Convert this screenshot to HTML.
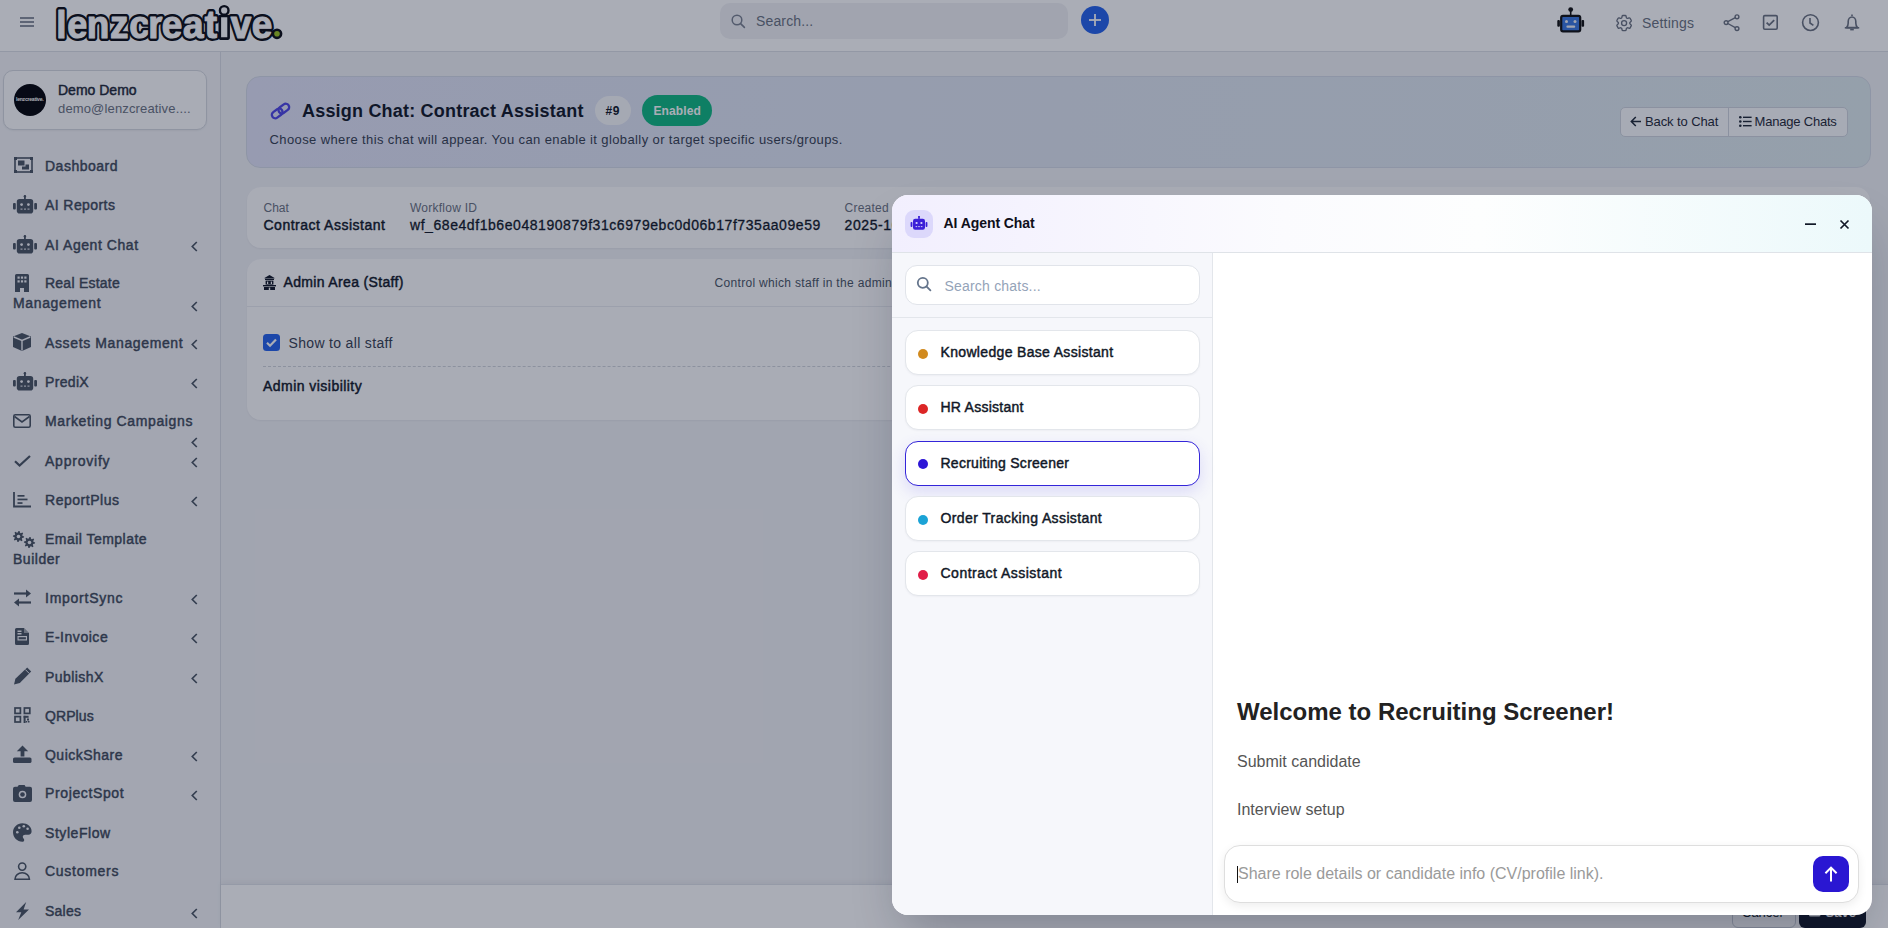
<!DOCTYPE html>
<html><head><meta charset="utf-8">
<style>
*{box-sizing:border-box;margin:0;padding:0}
html,body{width:1888px;height:928px;overflow:hidden}
body{position:relative;background:#f2f3f6;font-family:"Liberation Sans",sans-serif;color:#111827}
.a{position:absolute;white-space:nowrap}
.t{position:absolute;white-space:nowrap;line-height:1}
svg{position:absolute;overflow:visible}
.sbt{position:absolute;left:45px;font-size:14px;font-weight:400;-webkit-text-stroke:.45px #414a5a;color:#414a5a;line-height:1;white-space:nowrap}
.chev{position:absolute;left:191px;width:7px;height:11px}
.ico{position:absolute;fill:#4b5563}
</style></head><body>

<!-- HEADER -->
<div class="a" style="left:0;top:0;width:1888px;height:52px;background:#fff;border-bottom:1px solid #dcdfe5"></div>
<svg style="left:20px;top:17px" width="14" height="10" viewBox="0 0 14 10"><rect x="0" y="0" width="14" height="2" fill="#8a919d"/><rect x="0" y="4" width="14" height="2" fill="#8a919d"/><rect x="0" y="8" width="14" height="2" fill="#8a919d"/></svg>
<svg style="left:0;top:0" width="300" height="50" viewBox="0 0 300 50"><g font-family="Liberation Sans" font-weight="700" font-size="41" fill="#fff" stroke-linejoin="round" text-anchor="middle"><text transform="translate(61.4,37.5) scale(0.9,0.94)" stroke="#0b0d14" stroke-width="6.2">l</text><text transform="translate(61.4,37.5) scale(0.9,0.94)" stroke="#fff" stroke-width="1.2">l</text><text transform="translate(77.4,37.5) scale(0.9,0.94)" stroke="#0b0d14" stroke-width="6.2">e</text><text transform="translate(77.4,37.5) scale(0.9,0.94)" stroke="#fff" stroke-width="1.2">e</text><text transform="translate(98,37.5) scale(0.9,0.94)" stroke="#0b0d14" stroke-width="6.2">n</text><text transform="translate(98,37.5) scale(0.9,0.94)" stroke="#fff" stroke-width="1.2">n</text><text transform="translate(119.3,37.5) scale(0.9,0.94)" stroke="#0b0d14" stroke-width="6.2">z</text><text transform="translate(119.3,37.5) scale(0.9,0.94)" stroke="#fff" stroke-width="1.2">z</text><text transform="translate(139.4,37.5) scale(0.9,0.94)" stroke="#0b0d14" stroke-width="6.2">c</text><text transform="translate(139.4,37.5) scale(0.9,0.94)" stroke="#fff" stroke-width="1.2">c</text><text transform="translate(155.4,37.5) scale(0.9,0.94)" stroke="#0b0d14" stroke-width="6.2">r</text><text transform="translate(155.4,37.5) scale(0.9,0.94)" stroke="#fff" stroke-width="1.2">r</text><text transform="translate(172.1,37.5) scale(0.9,0.94)" stroke="#0b0d14" stroke-width="6.2">e</text><text transform="translate(172.1,37.5) scale(0.9,0.94)" stroke="#fff" stroke-width="1.2">e</text><text transform="translate(193.3,37.5) scale(0.9,0.94)" stroke="#0b0d14" stroke-width="6.2">a</text><text transform="translate(193.3,37.5) scale(0.9,0.94)" stroke="#fff" stroke-width="1.2">a</text><text transform="translate(210.8,37.5) scale(0.9,0.94)" stroke="#0b0d14" stroke-width="6.2">t</text><text transform="translate(210.8,37.5) scale(0.9,0.94)" stroke="#fff" stroke-width="1.2">t</text><rect x="219.8" y="16" width="8.8" height="22.6" rx="0.5" fill="#fff" stroke="#0b0d14" stroke-width="2.6"/><circle cx="224.2" cy="10.4" r="4.3" fill="#fff" stroke="#0b0d14" stroke-width="2.4"/><text transform="translate(241,37.5) scale(0.9,0.94)" stroke="#0b0d14" stroke-width="6.2">v</text><text transform="translate(241,37.5) scale(0.9,0.94)" stroke="#fff" stroke-width="1.2">v</text><text transform="translate(262,37.5) scale(0.9,0.94)" stroke="#0b0d14" stroke-width="6.2">e</text><text transform="translate(262,37.5) scale(0.9,0.94)" stroke="#fff" stroke-width="1.2">e</text></g><circle cx="277" cy="33.8" r="4.1" fill="#9cc21f" stroke="#0b0d14" stroke-width="2.6"/></svg>
<div class="a" style="left:720px;top:3px;width:348px;height:36px;background:#f1f2f5;border-radius:10px"></div>
<svg style="left:731px;top:14px" width="15" height="15" viewBox="0 0 15 15"><circle cx="6" cy="6" r="4.8" fill="none" stroke="#7b8290" stroke-width="1.5"/><line x1="9.6" y1="9.6" x2="13.4" y2="13.4" stroke="#7b8290" stroke-width="1.6" stroke-linecap="round"/></svg>
<div class="t" style="left:756px;top:14px;font-size:14px;color:#6b7280;letter-spacing:.15px">Search...</div>
<div class="a" style="left:1081px;top:6px;width:28px;height:28px;border-radius:50%;background:#2563eb"></div>
<svg style="left:1087px;top:12px" width="16" height="16" viewBox="0 0 16 16"><line x1="8" y1="2" x2="8" y2="14" stroke="#fff" stroke-width="1.8"/><line x1="2" y1="8" x2="14" y2="8" stroke="#fff" stroke-width="1.8"/></svg>


<!-- header right -->
<svg style="left:1556px;top:6px" width="30" height="28" viewBox="0 0 30 28">
 <line x1="14.7" y1="3.5" x2="14.7" y2="9.5" stroke="#111" stroke-width="1.6"/>
 <circle cx="14.7" cy="3.6" r="2.4" fill="#111"/>
 <rect x="5.2" y="9.8" width="19" height="15.6" rx="1.8" fill="#3b78e0" stroke="#111" stroke-width="2.2"/>
 <rect x="1.3" y="14" width="2.6" height="6.8" rx="1" fill="#111"/>
 <rect x="25.5" y="14" width="2.6" height="6.8" rx="1" fill="#111"/>
 <circle cx="10.5" cy="15.6" r="1.5" fill="#f3f4f6"/><circle cx="19" cy="15.6" r="1.5" fill="#f3f4f6"/>
 <rect x="10.4" y="19.6" width="8.8" height="2.2" rx="1" fill="#f3f4f6"/>
</svg>
<svg style="left:1614px;top:12.5px" width="20.2" height="20.2" viewBox="0 0 24 24"><path fill="none" stroke="#6b7280" stroke-width="1.6" d="M9.594 3.94c.09-.542.56-.94 1.11-.94h2.593c.55 0 1.02.398 1.11.94l.213 1.281c.063.374.313.686.645.87.074.04.147.083.22.127.325.196.72.257 1.075.124l1.217-.456a1.125 1.125 0 0 1 1.37.49l1.296 2.247a1.125 1.125 0 0 1-.26 1.431l-1.003.827c-.293.241-.438.613-.43.992a7.723 7.723 0 0 1 0 .255c-.008.378.137.75.43.991l1.004.827c.424.35.534.955.26 1.43l-1.298 2.247a1.125 1.125 0 0 1-1.369.491l-1.217-.456c-.355-.133-.75-.072-1.076.124a6.47 6.470 0 0 1-.22.128c-.331.183-.581.495-.644.869l-.213 1.281c-.09.543-.56.94-1.110.94h-2.594c-.55 0-1.019-.398-1.11-.94l-.213-1.281c-.062-.374-.312-.686-.644-.87a6.52 6.52 0 0 1-.22-.127c-.325-.196-.72-.257-1.076-.124l-1.217.456a1.125 1.125 0 0 1-1.369-.49l-1.297-2.247a1.125 1.125 0 0 1 .26-1.431l1.004-.827c.292-.24.437-.613.43-.991a6.932 6.932 0 0 1 0-.255c.007-.38-.138-.751-.43-.992l-1.004-.827a1.125 1.125 0 0 1-.26-1.43l1.297-2.247a1.125 1.125 0 0 1 1.37-.491l1.216.456c.356.133.751.072 1.076-.124.072-.044.146-.086.22-.128.332-.183.582-.495.644-.869l.214-1.28Z"/><circle cx="12" cy="12" r="3" fill="none" stroke="#6b7280" stroke-width="1.6"/></svg>
<div class="t" style="left:1642px;top:16px;font-size:14px;color:#6b7280;letter-spacing:.2px">Settings</div>
<svg style="left:1723px;top:13px" width="18" height="19" viewBox="0 0 18 19"><g fill="none" stroke="#6b7280" stroke-width="1.4"><circle cx="14" cy="3.8" r="1.9"/><circle cx="3.1" cy="9.6" r="1.9"/><circle cx="14" cy="15.6" r="1.9"/><line x1="4.8" y1="8.7" x2="12.3" y2="4.7"/><line x1="4.8" y1="10.5" x2="12.3" y2="14.7"/></g></svg>
<svg style="left:1762px;top:14px" width="17" height="17" viewBox="0 0 17 17"><rect x="1.6" y="1.6" width="13.6" height="13.6" rx="1.2" fill="none" stroke="#6b7280" stroke-width="1.6"/><path d="M4.6 8.6l2.6 2.5 5-5" fill="none" stroke="#6b7280" stroke-width="1.8"/></svg>
<svg style="left:1801px;top:13px" width="19" height="19" viewBox="0 0 19 19"><circle cx="9.5" cy="9.6" r="7.9" fill="none" stroke="#6b7280" stroke-width="1.6"/><path d="M9 5v5l3.4 2.4" fill="none" stroke="#6b7280" stroke-width="1.6"/></svg>
<svg style="left:1843px;top:13px" width="18" height="19" viewBox="0 0 18 19"><path d="M9 1.5v1.4M3.6 14.6c1-1.3 1.6-2.7 1.6-4.6V8.4C5.2 6 7 4 9 4s3.8 2 3.8 4.4V10c0 1.9.6 3.3 1.6 4.6z" fill="none" stroke="#6b7280" stroke-width="1.6" stroke-linejoin="round"/><path d="M1.8 14.8h14.4" stroke="#6b7280" stroke-width="1.6"/><path d="M7.2 16.6h3.6" stroke="#6b7280" stroke-width="1.6"/></svg>

<!-- SIDEBAR -->
<div class="a" style="left:0;top:52px;width:221px;height:876px;background:#f4f5f8;border-right:1px solid #d9dce3"></div>
<div class="a" style="left:3px;top:70px;width:203.5px;height:60px;background:#fdfdfe;border:1px solid #d6d9df;border-radius:10px;box-shadow:0 1px 2px rgba(0,0,0,.05)"></div>
<div class="a" style="left:14px;top:84px;width:32px;height:32px;border-radius:50%;background:#05060a"></div>
<div class="t" style="left:16px;top:97px;font-size:5px;color:#fff;font-weight:700;letter-spacing:-.2px">lenzcreative.</div>
<div class="t" style="left:58px;top:83px;font-size:14px;font-weight:400;-webkit-text-stroke:.45px #1f2937;color:#1f2937;letter-spacing:0px">Demo Demo</div>
<div class="t" style="left:58px;top:102px;font-size:13px;color:#6b7280;letter-spacing:.15px">demo@lenzcreative....</div>

<!-- sidebar items -->
<div class="sbt" style="left:45px;top:159px;letter-spacing:0.5px">Dashboard</div>
<div class="sbt" style="left:45px;top:198px;letter-spacing:0.416px">AI Reports</div>
<div class="sbt" style="left:45px;top:238px;letter-spacing:0.553px">AI Agent Chat</div>
<div class="sbt" style="left:45px;top:276px;letter-spacing:0.239px">Real Estate</div>
<div class="sbt" style="left:13px;top:296px;letter-spacing:0.648px">Management</div>
<div class="sbt" style="left:45px;top:336px;letter-spacing:0.628px">Assets Management</div>
<div class="sbt" style="left:45px;top:375px;letter-spacing:0.328px">PrediX</div>
<div class="sbt" style="left:45px;top:414px;letter-spacing:0.623px">Marketing Campaigns</div>
<div class="sbt" style="left:45px;top:454px;letter-spacing:0.782px">Approvify</div>
<div class="sbt" style="left:45px;top:493px;letter-spacing:0.523px">ReportPlus</div>
<div class="sbt" style="left:45px;top:532px;letter-spacing:0.468px">Email Template</div>
<div class="sbt" style="left:13px;top:552px;letter-spacing:0.529px">Builder</div>
<div class="sbt" style="left:45px;top:591px;letter-spacing:0.749px">ImportSync</div>
<div class="sbt" style="left:45px;top:630px;letter-spacing:0.543px">E-Invoice</div>
<div class="sbt" style="left:45px;top:670px;letter-spacing:0.436px">PublishX</div>
<div class="sbt" style="left:45px;top:709px;letter-spacing:0.086px">QRPlus</div>
<div class="sbt" style="left:45px;top:748px;letter-spacing:0.484px">QuickShare</div>
<div class="sbt" style="left:45px;top:786px;letter-spacing:0.625px">ProjectSpot</div>
<div class="sbt" style="left:45px;top:826px;letter-spacing:0.562px">StyleFlow</div>
<div class="sbt" style="left:45px;top:864px;letter-spacing:0.729px">Customers</div>
<div class="sbt" style="left:45px;top:904px;letter-spacing:0.244px">Sales</div>
<svg class="chev" style="top:241.0px" viewBox="0 0 7 11"><path d="M5.8 1L1.3 5.5 5.8 10" fill="none" stroke="#4b5563" stroke-width="1.7"/></svg>
<svg class="chev" style="top:300.5px" viewBox="0 0 7 11"><path d="M5.8 1L1.3 5.5 5.8 10" fill="none" stroke="#4b5563" stroke-width="1.7"/></svg>
<svg class="chev" style="top:339.0px" viewBox="0 0 7 11"><path d="M5.8 1L1.3 5.5 5.8 10" fill="none" stroke="#4b5563" stroke-width="1.7"/></svg>
<svg class="chev" style="top:378.0px" viewBox="0 0 7 11"><path d="M5.8 1L1.3 5.5 5.8 10" fill="none" stroke="#4b5563" stroke-width="1.7"/></svg>
<svg class="chev" style="top:437.0px" viewBox="0 0 7 11"><path d="M5.8 1L1.3 5.5 5.8 10" fill="none" stroke="#4b5563" stroke-width="1.7"/></svg>
<svg class="chev" style="top:457.0px" viewBox="0 0 7 11"><path d="M5.8 1L1.3 5.5 5.8 10" fill="none" stroke="#4b5563" stroke-width="1.7"/></svg>
<svg class="chev" style="top:496.0px" viewBox="0 0 7 11"><path d="M5.8 1L1.3 5.5 5.8 10" fill="none" stroke="#4b5563" stroke-width="1.7"/></svg>
<svg class="chev" style="top:593.5px" viewBox="0 0 7 11"><path d="M5.8 1L1.3 5.5 5.8 10" fill="none" stroke="#4b5563" stroke-width="1.7"/></svg>
<svg class="chev" style="top:633.0px" viewBox="0 0 7 11"><path d="M5.8 1L1.3 5.5 5.8 10" fill="none" stroke="#4b5563" stroke-width="1.7"/></svg>
<svg class="chev" style="top:673.0px" viewBox="0 0 7 11"><path d="M5.8 1L1.3 5.5 5.8 10" fill="none" stroke="#4b5563" stroke-width="1.7"/></svg>
<svg class="chev" style="top:751.0px" viewBox="0 0 7 11"><path d="M5.8 1L1.3 5.5 5.8 10" fill="none" stroke="#4b5563" stroke-width="1.7"/></svg>
<svg class="chev" style="top:790.0px" viewBox="0 0 7 11"><path d="M5.8 1L1.3 5.5 5.8 10" fill="none" stroke="#4b5563" stroke-width="1.7"/></svg>
<svg class="chev" style="top:907.5px" viewBox="0 0 7 11"><path d="M5.8 1L1.3 5.5 5.8 10" fill="none" stroke="#4b5563" stroke-width="1.7"/></svg>

<svg class="ico" style="left:14px;top:157px" width="19" height="16" viewBox="0 0 19 16"><rect x="1" y="1" width="17" height="14" fill="none" stroke="#4b5563" stroke-width="1.6"/><rect x="0" y="0" width="3" height="3"/><rect x="16" y="0" width="3" height="3"/><rect x="0" y="13" width="3" height="3"/><rect x="16" y="13" width="3" height="3"/><rect x="4" y="3.5" width="6.5" height="5" /><path d="M11.5 7.5h3.5v5h-7v-3h3.5z"/></svg>
<svg class="ico" style="left:12.5px;top:195px" width="24" height="19" viewBox="0 0 24 19"><rect x="11" y="0.5" width="1.8" height="4"/><circle cx="11.9" cy="1.2" r="1.2"/><rect x="3.8" y="4" width="16.4" height="14.5" rx="2.8"/><rect x="0" y="8" width="2.8" height="6.5" rx="1"/><rect x="21.2" y="8" width="2.8" height="6.5" rx="1"/><circle cx="8.6" cy="9.6" r="1.4" fill="#f4f5f8"/><circle cx="15.4" cy="9.6" r="1.4" fill="#f4f5f8"/><rect x="7.5" y="13.6" width="2" height="1" fill="#f4f5f8"/><rect x="11" y="13.6" width="2" height="1" fill="#f4f5f8"/><rect x="14.5" y="13.6" width="2" height="1" fill="#f4f5f8"/></svg><svg class="ico" style="left:12.5px;top:234.5px" width="24" height="19" viewBox="0 0 24 19"><rect x="11" y="0.5" width="1.8" height="4"/><circle cx="11.9" cy="1.2" r="1.2"/><rect x="3.8" y="4" width="16.4" height="14.5" rx="2.8"/><rect x="0" y="8" width="2.8" height="6.5" rx="1"/><rect x="21.2" y="8" width="2.8" height="6.5" rx="1"/><circle cx="8.6" cy="9.6" r="1.4" fill="#f4f5f8"/><circle cx="15.4" cy="9.6" r="1.4" fill="#f4f5f8"/><rect x="7.5" y="13.6" width="2" height="1" fill="#f4f5f8"/><rect x="11" y="13.6" width="2" height="1" fill="#f4f5f8"/><rect x="14.5" y="13.6" width="2" height="1" fill="#f4f5f8"/></svg><svg class="ico" style="left:12.5px;top:372px" width="24" height="19" viewBox="0 0 24 19"><rect x="11" y="0.5" width="1.8" height="4"/><circle cx="11.9" cy="1.2" r="1.2"/><rect x="3.8" y="4" width="16.4" height="14.5" rx="2.8"/><rect x="0" y="8" width="2.8" height="6.5" rx="1"/><rect x="21.2" y="8" width="2.8" height="6.5" rx="1"/><circle cx="8.6" cy="9.6" r="1.4" fill="#f4f5f8"/><circle cx="15.4" cy="9.6" r="1.4" fill="#f4f5f8"/><rect x="7.5" y="13.6" width="2" height="1" fill="#f4f5f8"/><rect x="11" y="13.6" width="2" height="1" fill="#f4f5f8"/><rect x="14.5" y="13.6" width="2" height="1" fill="#f4f5f8"/></svg>
<svg class="ico" style="left:15px;top:274px" width="14" height="18" viewBox="0 0 14 18"><path d="M1.5 0h11A1.5 1.5 0 0 1 14 1.5V18H9v-4H5v4H0V1.5A1.5 1.5 0 0 1 1.5 0z"/><g fill="#f4f5f8"><rect x="2.5" y="2.5" width="2.2" height="2.2"/><rect x="5.9" y="2.5" width="2.2" height="2.2"/><rect x="9.3" y="2.5" width="2.2" height="2.2"/><rect x="2.5" y="6.3" width="2.2" height="2.2"/><rect x="5.9" y="6.3" width="2.2" height="2.2"/><rect x="9.3" y="6.3" width="2.2" height="2.2"/></g></svg>
<svg class="ico" style="left:13px;top:333px" width="18" height="18" viewBox="0 0 18 18"><path d="M9 0L18 3.5V14L9 18 0 14V3.5z"/><path d="M0.8 4L9 7.4 17.2 4M9 7.4V17.5" fill="none" stroke="#f4f5f8" stroke-width="1.4"/></svg>
<svg class="ico" style="left:13px;top:414px" width="18" height="14" viewBox="0 0 18 14"><rect x="0.8" y="0.8" width="16.4" height="12.4" rx="1.5" fill="none" stroke="#4b5563" stroke-width="1.6"/><path d="M1.5 2.5L9 8l7.5-5.5" fill="none" stroke="#4b5563" stroke-width="1.6"/></svg>
<svg class="ico" style="left:14px;top:455px" width="17" height="12" viewBox="0 0 17 12"><path d="M1 6.2l4.6 4.4L16 1" fill="none" stroke="#4b5563" stroke-width="2.2"/></svg>
<svg class="ico" style="left:13px;top:491.5px" width="18" height="16" viewBox="0 0 18 16"><path d="M1 0v14.5h17" fill="none" stroke="#4b5563" stroke-width="1.8"/><rect x="4.5" y="3" width="7" height="1.7"/><rect x="4.5" y="6.6" width="10" height="1.7"/><rect x="4.5" y="10.2" width="5" height="1.7"/></svg>
<svg class="ico" style="left:13px;top:530.5px" width="23" height="17" viewBox="0 0 23 17"><polygon points="11.10,5.50 10.99,6.59 9.23,7.04 8.85,7.74 9.46,9.46 8.61,10.16 7.04,9.23 6.29,9.45 5.50,11.10 4.41,10.99 3.96,9.23 3.26,8.85 1.54,9.46 0.84,8.61 1.77,7.04 1.55,6.29 -0.10,5.50 0.01,4.41 1.77,3.96 2.15,3.26 1.54,1.54 2.39,0.84 3.96,1.77 4.71,1.55 5.50,-0.10 6.59,0.01 7.04,1.77 7.74,2.15 9.46,1.54 10.16,2.39 9.23,3.96 9.45,4.71"/><circle cx="5.5" cy="5.5" r="1.8" fill="#f4f5f8"/><polygon points="22.10,11.50 21.99,12.59 20.23,13.04 19.85,13.74 20.46,15.46 19.61,16.16 18.04,15.23 17.29,15.45 16.50,17.10 15.41,16.99 14.96,15.23 14.26,14.85 12.54,15.46 11.84,14.61 12.77,13.04 12.55,12.29 10.90,11.50 11.01,10.41 12.77,9.96 13.15,9.26 12.54,7.54 13.39,6.84 14.96,7.77 15.71,7.55 16.50,5.90 17.59,6.01 18.04,7.77 18.74,8.15 20.46,7.54 21.16,8.39 20.23,9.96 20.45,10.71"/><circle cx="16.5" cy="11.5" r="1.8" fill="#f4f5f8"/></svg>
<svg class="ico" style="left:13px;top:588.5px" width="19" height="18" viewBox="0 0 19 18"><path d="M1 4.5h13" stroke="#4b5563" stroke-width="2.2"/><path d="M13 0.5l5 4-5 4z"/><path d="M18 13.5H5" stroke="#4b5563" stroke-width="2.2"/><path d="M6 9.5l-5 4 5 4z"/></svg>
<svg class="ico" style="left:15px;top:627.5px" width="15" height="17" viewBox="0 0 15 17"><path d="M1.5 0H9l5 5v10.5a1.5 1.5 0 0 1-1.5 1.5h-11A1.5 1.5 0 0 1 0 15.5v-14A1.5 1.5 0 0 1 1.5 0z"/><path d="M9 0v5h5" fill="#f4f5f8" opacity=".5"/><rect x="2.5" y="8" width="9.5" height="4.5" fill="#f4f5f8"/><rect x="3.6" y="9.2" width="7.3" height="2.1"/><rect x="2.5" y="2.5" width="4" height="1.5" fill="#f4f5f8"/><rect x="2.5" y="5" width="4" height="1.5" fill="#f4f5f8"/></svg>
<svg class="ico" style="left:13px;top:667px" width="19" height="18" viewBox="0 0 19 18"><path d="M14.2 0.6l4 4-11.4 11.4L1 17.6l1.4-5.8z"/><path d="M12.3 2.5l4 4" stroke="#f4f5f8" stroke-width="1"/></svg>
<svg class="ico" style="left:14px;top:707px" width="17" height="16" viewBox="0 0 17 16"><g fill="none" stroke="#4b5563" stroke-width="1.7"><rect x="1" y="1" width="5.4" height="5.4"/><rect x="10.4" y="1" width="5.4" height="5.4"/><rect x="1" y="9.6" width="5.4" height="5.4"/></g><rect x="9.6" y="8.8" width="2" height="7.2"/><rect x="9.6" y="8.8" width="5" height="2"/><rect x="13" y="11.5" width="2" height="2"/><rect x="14" y="14" width="1.5" height="1.5"/><rect x="11.8" y="14" width="1.5" height="1.5"/></svg>
<svg class="ico" style="left:13px;top:745px" width="19" height="18" viewBox="0 0 19 18"><path d="M9.5 0.5L3.8 6.2h3.8v5.3h3.8V6.2h3.8z"/><rect x="0" y="12.5" width="18.5" height="5.5" rx="1.6"/></svg>
<svg class="ico" style="left:13px;top:784.5px" width="19" height="17" viewBox="0 0 19 17"><path d="M2 1.8h2.5L5.8 0h5.8l1 1.8H17a2 2 0 0 1 2 2V15a2 2 0 0 1-2 2H2a2 2 0 0 1-2-2V3.8a2 2 0 0 1 2-2z"/><circle cx="9.5" cy="9.5" r="3.8" fill="#f4f5f8"/><circle cx="9.5" cy="9.5" r="2.3"/></svg>
<svg class="ico" style="left:13px;top:822.5px" width="19" height="19" viewBox="0 0 19 19"><path d="M9.3 0.2C4.2 0.2 0 4.2 0 9.3s4.2 9.5 9.3 9.5c1.3 0 1.9-0.9 1.9-1.8 0-1.4-1.4-1.7-1.4-3.2 0-1.3 1-2.1 2.3-2.1h3.2c2.1 0 3.3-1.4 3.3-3.5C18.6 3.6 14.4 0.2 9.3 0.2z"/><g fill="#f4f5f8"><circle cx="4.3" cy="9.3" r="1.3"/><circle cx="6.3" cy="4.8" r="1.3"/><circle cx="10.8" cy="3.3" r="1.3"/><circle cx="14.6" cy="5.8" r="1.3"/></g></svg>
<svg class="ico" style="left:14px;top:862px" width="17" height="18" viewBox="0 0 17 18"><circle cx="8.2" cy="4.6" r="3.6" fill="none" stroke="#4b5563" stroke-width="1.6"/><path d="M1 17.2c0-3.8 3.2-6.4 7.2-6.4s7.2 2.6 7.2 6.4z" fill="none" stroke="#4b5563" stroke-width="1.6"/></svg>
<svg class="ico" style="left:15px;top:902px" width="15" height="18" viewBox="0 0 15 18"><path d="M11.2 0L1 10.2h5.3L3.2 18 14 7.5H8.6z"/></svg>


<!-- CONTENT -->
<div class="a" style="left:246px;top:76px;width:1625px;height:92px;border-radius:14px;border:1px solid #d5dbe6;background:linear-gradient(90deg,#e2e4f7 0%,#e0e7f2 50%,#dfebef 100%)"></div>
<svg style="left:269px;top:102px" width="23" height="18" viewBox="0 0 23 18"><g transform="rotate(-36 11.5 9)" fill="none" stroke="#4f46e5" stroke-width="2.3"><rect x="1.6" y="5.6" width="11.6" height="6.8" rx="3.4"/><rect x="9.8" y="5.6" width="11.6" height="6.8" rx="3.4"/></g></svg>
<div class="t" style="left:302px;top:101.5px;font-size:18px;font-weight:700;color:#111827;letter-spacing:.2px">Assign Chat: Contract Assistant</div>
<div class="a" style="left:595px;top:96px;width:36px;height:29px;border-radius:15px;background:#f8f9fb"></div>
<div class="t" style="left:605.5px;top:105px;font-size:12px;font-weight:700;color:#111827;letter-spacing:.6px">#9</div>
<div class="a" style="left:642px;top:95px;width:70px;height:31px;border-radius:16px;background:#10b981"></div>
<div class="t" style="left:653.5px;top:105px;font-size:12px;font-weight:700;color:#fff;letter-spacing:.1px">Enabled</div>
<div class="t" style="left:269.5px;top:133px;font-size:13px;color:#374151;letter-spacing:.39px">Choose where this chat will appear. You can enable it globally or target specific users/groups.</div>
<div class="a" style="left:1620px;top:107px;width:227.5px;height:30px;border-radius:5px;border:1px solid #cfd5de;background:#fbfcfd"></div>
<div class="a" style="left:1728px;top:107px;width:1px;height:30px;background:#cfd5de"></div>
<svg style="left:1630px;top:116px" width="12" height="11" viewBox="0 0 12 11"><path d="M11 5.5H1.5M5.8 1L1.3 5.5 5.8 10" fill="none" stroke="#1f2937" stroke-width="1.5"/></svg>
<div class="t" style="left:1645px;top:115px;font-size:13px;color:#1f2937;letter-spacing:-.1px">Back to Chat</div>
<svg style="left:1738.5px;top:116px" width="13" height="11" viewBox="0 0 13 11"><g fill="#1f2937"><circle cx="1.3" cy="1.3" r="1.3"/><circle cx="1.3" cy="5.5" r="1.3"/><circle cx="1.3" cy="9.7" r="1.3"/><rect x="4" y=".6" width="8.6" height="1.4"/><rect x="4" y="4.8" width="8.6" height="1.4"/><rect x="4" y="9" width="8.6" height="1.4"/></g></svg>
<div class="t" style="left:1754.5px;top:115px;font-size:13px;color:#1f2937;letter-spacing:-.2px">Manage Chats</div>

<div class="a" style="left:247px;top:187px;width:1623px;height:61px;border-radius:14px;background:#fdfdfe;box-shadow:0 1px 2px rgba(15,23,42,.05)"></div>
<div class="t" style="left:263.5px;top:202px;font-size:12px;color:#6b7280">Chat</div>
<div class="t" style="left:263.5px;top:218px;font-size:14px;font-weight:400;-webkit-text-stroke:.45px #111827;color:#111827;letter-spacing:.51px">Contract Assistant</div>
<div class="t" style="left:410px;top:202px;font-size:12px;color:#6b7280;letter-spacing:.25px">Workflow ID</div>
<div class="t" style="left:410px;top:218px;font-size:14px;font-weight:400;-webkit-text-stroke:.3px #111827;color:#111827;letter-spacing:.56px">wf_68e4df1b6e048190879f31c6979ebc0d06b17f735aa09e59</div>
<div class="t" style="left:844.5px;top:202px;font-size:12px;color:#6b7280;letter-spacing:.25px">Created</div>
<div class="t" style="left:844.5px;top:218px;font-size:14px;font-weight:400;-webkit-text-stroke:.35px #111827;color:#111827;letter-spacing:.6px">2025-10-14 16:22</div>

<div class="a" style="left:247px;top:259px;width:1623px;height:161px;border-radius:14px;background:#fdfdfe;box-shadow:0 1px 2px rgba(15,23,42,.05)"></div>
<div class="a" style="left:247px;top:306px;width:1623px;height:1px;background:#eaecf0"></div>
<svg style="left:263px;top:274.5px" width="13" height="15" viewBox="0 0 13 15"><g fill="#111827"><path d="M6.5 0L1 3.2h11z"/><rect x="2" y="3.6" width="9" height="1.4"/><rect x="2.6" y="5.6" width="7.8" height="4"/><rect x="0" y="10" width="13" height="1.4"/><rect x="1" y="12" width="11" height="3"/></g><g fill="#fdfdfe"><rect x="4" y="6.6" width="1.2" height="2.4"/><rect x="7.8" y="6.6" width="1.2" height="2.4"/><rect x="5.8" y="12.6" width="1.4" height="2.4"/></g></svg>
<div class="t" style="left:283.5px;top:275px;font-size:14px;font-weight:400;-webkit-text-stroke:.45px #111827;color:#111827;letter-spacing:.34px">Admin Area (Staff)</div>
<div class="t" style="left:714.5px;top:277px;font-size:12px;color:#4b5563;letter-spacing:.32px">Control which staff in the admin area can see this chat.</div>
<div class="a" style="left:263px;top:334px;width:17px;height:17px;border-radius:3.5px;background:#2563eb"></div>
<svg style="left:263px;top:334px" width="17" height="17" viewBox="0 0 17 17"><path d="M4 8.8l3 2.9 6-6.2" fill="none" stroke="#fff" stroke-width="2.2"/></svg>
<div class="t" style="left:288.5px;top:336px;font-size:14px;color:#374151;letter-spacing:.33px">Show to all staff</div>
<div class="a" style="left:263px;top:366px;width:1591px;height:0;border-top:1px dashed #d1d5db"></div>
<div class="t" style="left:263px;top:379px;font-size:14px;font-weight:400;-webkit-text-stroke:.45px #111827;color:#111827;letter-spacing:.46px">Admin visibility</div>

<div class="a" style="left:221px;top:884px;width:1667px;height:44px;background:#fff;border-top:1px solid #dfe2e8;box-shadow:0 -2px 6px rgba(15,23,42,.05)"></div>
<div class="a" style="left:1732px;top:894px;width:64px;height:34px;border-radius:6px;border:1px solid #c9ced6;background:#fff"></div>
<div class="t" style="left:1742px;top:906px;font-size:13px;color:#111827">Cancel</div>
<div class="a" style="left:1799px;top:894px;width:67px;height:34px;border-radius:6px;background:#111827"></div>
<svg style="left:1809px;top:905px" width="12" height="12" viewBox="0 0 12 12"><rect x="0" y="0" width="11.5" height="11.5" rx="1.5" fill="#fff"/></svg>
<div class="t" style="left:1825.5px;top:906px;font-size:13px;font-weight:700;color:#fff">Save</div>

<!-- OVERLAY -->
<div class="a" style="left:0;top:0;width:1888px;height:928px;background:rgba(12,20,45,.35)"></div>


<!-- CHAT PANEL -->
<div class="a" style="left:892px;top:195px;width:980px;height:720px;border-radius:16px;background:#fff;box-shadow:0 25px 50px -12px rgba(15,23,42,.28);overflow:hidden">
  <div class="a" style="left:0;top:0;width:980px;height:58px;background:linear-gradient(90deg,#f2effe 0%,#fbfbfe 40%,#fdfefe 60%,#ecf9fb 100%);border-bottom:1px solid #dfe3e8"></div>
  <div class="a" style="left:0;top:58px;width:321px;height:662px;background:#f6f7fb;border-right:1px solid #e3e6eb"></div>
  <div class="a" style="left:0;top:122px;width:320px;height:1px;background:#e3e6eb"></div>
</div>
<div class="a" style="left:905px;top:210px;width:28px;height:28px;border-radius:9px;background:#dcd8fb"></div>
<svg style="left:910px;top:216px" width="18" height="15" viewBox="0 0 18 15"><g fill="#3b1fd8"><rect x="8.3" y="0" width="1.4" height="3"/><circle cx="9" cy="0.9" r="0.9"/><rect x="3" y="2.8" width="12" height="11" rx="2.2"/><rect x="0.6" y="6" width="1.8" height="5" rx=".8"/><rect x="15.6" y="6" width="1.8" height="5" rx=".8"/></g><g fill="#dcd8fb"><circle cx="6.6" cy="7" r="1.1"/><circle cx="11.4" cy="7" r="1.1"/><rect x="5.6" y="10.2" width="1.6" height=".9"/><rect x="8.2" y="10.2" width="1.6" height=".9"/><rect x="10.8" y="10.2" width="1.6" height=".9"/></g></svg>
<div class="t" style="left:943.5px;top:215.5px;font-size:14px;font-weight:700;color:#0f0f1a;letter-spacing:-.07px">AI Agent Chat</div>
<svg style="left:1804px;top:218px" width="13" height="12" viewBox="0 0 13 12"><rect x="1" y="5.3" width="11" height="1.7" fill="#111827"/></svg>
<svg style="left:1839px;top:219px" width="11" height="11" viewBox="0 0 11 11"><path d="M1.5 1.5l8 8M9.5 1.5l-8 8" stroke="#111827" stroke-width="1.7"/></svg>

<div class="a" style="left:905px;top:265px;width:295px;height:40px;border-radius:12px;border:1px solid #e1e4ea;background:#fff"></div>
<svg style="left:916px;top:276px" width="16" height="16" viewBox="0 0 16 16"><circle cx="6.8" cy="6.8" r="5" fill="none" stroke="#64748b" stroke-width="1.8"/><line x1="10.4" y1="10.4" x2="14.4" y2="14.4" stroke="#64748b" stroke-width="1.8" stroke-linecap="round"/></svg>
<div class="t" style="left:944.5px;top:279px;font-size:14px;color:#94a3b8;letter-spacing:.2px">Search chats...</div>
<div class="a" style="left:905px;top:330px;width:295px;height:45px;border-radius:13px;border:1px solid #e3e6eb;background:#fff;box-shadow:0 1px 2px rgba(16,24,40,.04)"></div>
<div class="a" style="left:918px;top:348.8px;width:10px;height:10px;border-radius:50%;background:#d18a1e"></div>
<div class="t" style="left:940.5px;top:344.5px;font-size:14px;font-weight:400;-webkit-text-stroke:.45px #111827;color:#111827;letter-spacing:.33px">Knowledge Base Assistant</div>
<div class="a" style="left:905px;top:385px;width:295px;height:45px;border-radius:13px;border:1px solid #e3e6eb;background:#fff;box-shadow:0 1px 2px rgba(16,24,40,.04)"></div>
<div class="a" style="left:918px;top:403.8px;width:10px;height:10px;border-radius:50%;background:#dc2626"></div>
<div class="t" style="left:940.5px;top:399.5px;font-size:14px;font-weight:400;-webkit-text-stroke:.45px #111827;color:#111827;letter-spacing:.26px">HR Assistant</div>
<div class="a" style="left:905px;top:441px;width:295px;height:45px;border-radius:13px;border:1.5px solid #3425d9;background:#fff;box-shadow:0 6px 16px rgba(79,70,229,.16)"></div>
<div class="a" style="left:918px;top:459.3px;width:10px;height:10px;border-radius:50%;background:#2d16d6"></div>
<div class="t" style="left:940.5px;top:455.5px;font-size:14px;font-weight:400;-webkit-text-stroke:.45px #111827;color:#111827;letter-spacing:.26px">Recruiting Screener</div>
<div class="a" style="left:905px;top:496px;width:295px;height:45px;border-radius:13px;border:1px solid #e3e6eb;background:#fff;box-shadow:0 1px 2px rgba(16,24,40,.04)"></div>
<div class="a" style="left:918px;top:514.8px;width:10px;height:10px;border-radius:50%;background:#1ba3d6"></div>
<div class="t" style="left:940.5px;top:510.5px;font-size:14px;font-weight:400;-webkit-text-stroke:.45px #111827;color:#111827;letter-spacing:.38px">Order Tracking Assistant</div>
<div class="a" style="left:905px;top:551px;width:295px;height:45px;border-radius:13px;border:1px solid #e3e6eb;background:#fff;box-shadow:0 1px 2px rgba(16,24,40,.04)"></div>
<div class="a" style="left:918px;top:569.8px;width:10px;height:10px;border-radius:50%;background:#e11d48"></div>
<div class="t" style="left:940.5px;top:565.5px;font-size:14px;font-weight:400;-webkit-text-stroke:.45px #111827;color:#111827;letter-spacing:.49px">Contract Assistant</div>

<div class="t" style="left:1237px;top:700px;font-size:24px;font-weight:700;color:#222">Welcome to Recruiting Screener!</div>
<div class="t" style="left:1237px;top:754px;font-size:16px;color:#555">Submit candidate</div>
<div class="t" style="left:1237px;top:802px;font-size:16px;color:#555">Interview setup</div>
<div class="a" style="left:1224px;top:845px;width:635px;height:57.5px;border-radius:16px;border:1px solid #dedede;background:#fff;box-shadow:0 3px 10px rgba(0,0,0,.07)"></div>
<div class="a" style="left:1237px;top:866px;width:1.3px;height:17px;background:#111"></div>
<div class="t" style="left:1238px;top:865.5px;font-size:16px;color:#9a9a9a">Share role details or candidate info (CV/profile link).</div>
<div class="a" style="left:1813px;top:856px;width:36px;height:36px;border-radius:10px;background:#2a17d2"></div>
<svg style="left:1823px;top:865px" width="16" height="18" viewBox="0 0 16 18"><path d="M8 16.5V2.8M2.4 8.2L8 2.6l5.6 5.6" fill="none" stroke="#fff" stroke-width="2"/></svg>

</body></html>
